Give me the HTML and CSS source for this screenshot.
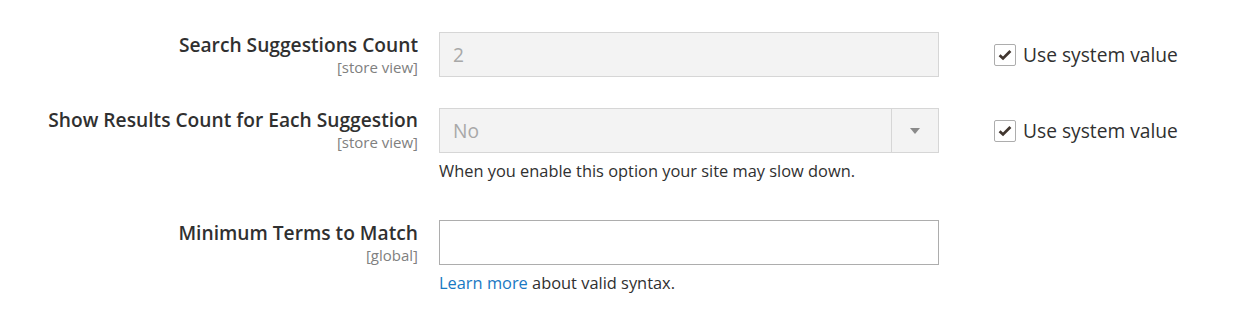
FILE: index.html
```html
<!DOCTYPE html>
<html lang="en">
<head>
    <meta charset="UTF-8">
    <meta name="viewport" content="width=device-width, initial-scale=1.0">
    <title>Catalog Search Settings</title>
    <link rel="stylesheet" href="styles.css">
</head>
<body>

    <div class="fieldset">

        <!-- Search Suggestions Count -->
        <div class="field">
            <div class="field-label">
                <label for="suggest-count">Search Suggestions Count</label>
                <span class="scope">[store view]</span>
            </div>
            <div class="field-control">
                <input type="text" id="suggest-count" class="input-text" value="2" disabled>
            </div>
            <div class="use-default">
                <label class="check">
                    <span class="check-box">
                        <svg width="14" height="12" viewBox="0 0 14 12"><path d="M1.6 6.2 L5 9.4 L12.4 2" fill="none" stroke="#41362f" stroke-width="2.8"/></svg>
                    </span>
                    Use system value
                </label>
            </div>
        </div>

        <!-- Show Results Count -->
        <div class="field field-note">
            <div class="field-label">
                <label for="results-count">Show Results Count for Each Suggestion</label>
                <span class="scope">[store view]</span>
            </div>
            <div class="field-control">
                <div class="select">
                    <span class="select-value">No</span>
                    <span class="select-arrow"></span>
                </div>
                <div class="note">When you enable this option your site may slow down.</div>
            </div>
            <div class="use-default">
                <label class="check">
                    <span class="check-box">
                        <svg width="14" height="12" viewBox="0 0 14 12"><path d="M1.6 6.2 L5 9.4 L12.4 2" fill="none" stroke="#41362f" stroke-width="2.8"/></svg>
                    </span>
                    Use system value
                </label>
            </div>
        </div>

        <!-- Minimum Terms to Match -->
        <div class="field">
            <div class="field-label">
                <label for="min-terms">Minimum Terms to Match</label>
                <span class="scope">[global]</span>
            </div>
            <div class="field-control">
                <input type="text" id="min-terms" class="input-text input-active">
                <div class="note"><a href="#">Learn more</a> about valid syntax.</div>
            </div>
            <div class="use-default"></div>
        </div>

    </div>

</body>
</html>
```

FILE: styles.css
```css
/* Global Styles */
body {
    margin: 0;
    background: #ffffff;
    color: #303030;
    font-family: 'Open Sans', 'Noto Sans', sans-serif;
}

.fieldset {
    padding-top: 32px;
}

/* Field Rows */
.field {
    display: grid;
    grid-template-columns: 418px 500px 1fr;
    column-gap: 21px;
    margin-bottom: 31px;
}

.field-note {
    margin-bottom: 38px;
}

.field-label {
    text-align: right;
    padding-top: 1px;
}

.field-label label {
    display: block;
    font-size: 19.2px;
    font-weight: 600;
    line-height: 24px;
}

.field-note .field-label {
    padding-top: 0;
}

.scope {
    display: block;
    margin-top: 1px;
    font-size: 15px;
    line-height: 18px;
    color: #808080;
}

/* Inputs */
.input-text {
    box-sizing: border-box;
    display: block;
    width: 500px;
    height: 45px;
    margin: 0;
    padding: 0 13px;
    border: 1px solid #d6d6d6;
    border-radius: 0;
    background: #f3f3f3;
    color: #a8a8a8;
    font-family: inherit;
    font-size: 19.2px;
    outline: none;
}

.input-active {
    border-color: #adadad;
    background: #ffffff;
    color: #303030;
}

.select {
    box-sizing: border-box;
    display: flex;
    width: 500px;
    height: 45px;
    border: 1px solid #d6d6d6;
    background: #f3f3f3;
}

.select-value {
    flex: 1;
    padding-left: 13px;
    line-height: 43px;
    font-size: 19.2px;
    color: #a8a8a8;
}

.select-arrow {
    position: relative;
    width: 46px;
    border-left: 1px solid #d6d6d6;
}

.select-arrow:before {
    content: "";
    position: absolute;
    left: 18px;
    top: 19px;
    border-left: 5px solid transparent;
    border-right: 5px solid transparent;
    border-top: 6px solid #8a8a8a;
}

/* Notes */
.note {
    margin-top: 7px;
    font-size: 16.4px;
    line-height: 22px;
    color: #303030;
}

.note a {
    color: #1979c3;
    text-decoration: none;
}

/* Use system value */
.use-default {
    padding-left: 34px;
}

.check {
    display: flex;
    align-items: center;
    height: 45px;
    font-size: 19.2px;
    color: #303030;
}

.check-box {
    box-sizing: border-box;
    display: flex;
    align-items: center;
    justify-content: center;
    width: 22px;
    height: 22px;
    margin-right: 7px;
    border: 1px solid #adadad;
    border-radius: 2px;
    background: #ffffff;
}
```
